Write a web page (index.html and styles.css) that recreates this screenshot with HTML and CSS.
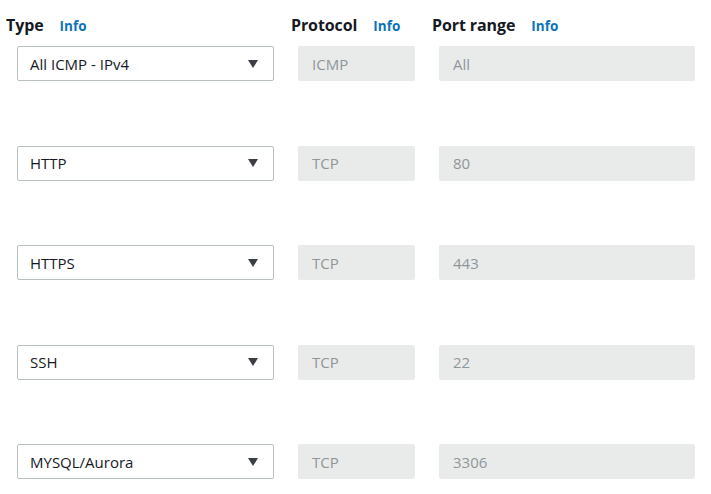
FILE: index.html
```html
<!DOCTYPE html>
<html>
<head>
<meta charset="utf-8">
<link rel="stylesheet" href="styles.css">
</head>
<body>
<div class="table">
  <div class="head">
    <div class="label">Type <span class="info">Info</span></div>
    <div class="label">Protocol <span class="info">Info</span></div>
    <div class="label">Port range <span class="info">Info</span></div>
  </div>
  <div class="rows">
    <div class="row">
      <div class="select"><span>All ICMP - IPv4</span><span class="caret"></span></div>
      <div class="field proto">ICMP</div>
      <div class="field port">All</div>
    </div>
    <div class="row">
      <div class="select"><span>HTTP</span><span class="caret"></span></div>
      <div class="field proto">TCP</div>
      <div class="field port">80</div>
    </div>
    <div class="row">
      <div class="select"><span>HTTPS</span><span class="caret"></span></div>
      <div class="field proto">TCP</div>
      <div class="field port">443</div>
    </div>
    <div class="row">
      <div class="select"><span>SSH</span><span class="caret"></span></div>
      <div class="field proto">TCP</div>
      <div class="field port">22</div>
    </div>
    <div class="row">
      <div class="select"><span>MYSQL/Aurora</span><span class="caret"></span></div>
      <div class="field proto">TCP</div>
      <div class="field port">3306</div>
    </div>
  </div>
</div>
</body>
</html>
```
FILE: styles.css
```css
html, body {
  margin: 0;
  padding: 0;
  background: #ffffff;
}
body {
  font-family: "Open Sans", "Noto Sans", sans-serif;
  color: #16191f;
  width: 711px;
  height: 494px;
  overflow: hidden;
}
.table {
  padding: 14px 0 0 6px;
}
.head, .row {
  display: grid;
  grid-template-columns: 268px 124px 263px;
  column-gap: 17px;
}
.head {
  height: 32px;
}
.label {
  font-size: 16px;
  font-weight: 700;
  line-height: 22px;
  letter-spacing: -0.1px;
  white-space: nowrap;
}
.info {
  color: #0a73bb;
  font-size: 13.5px;
  font-weight: 700;
  letter-spacing: 0;
  margin-left: 12px;
}
.rows {
  display: flex;
  flex-direction: column;
  gap: 64.5px;
}
.select, .field {
  height: 35px;
  box-sizing: border-box;
  display: flex;
  align-items: center;
  font-size: 15px;
}
.select {
  margin-left: 11px;
  border: 1px solid #b8c0c1;
  border-radius: 2px;
  padding: 0 15px 0 12px;
  justify-content: space-between;
  color: #16191f;
}
.caret {
  width: 0;
  height: 0;
  border-left: 5.5px solid transparent;
  border-right: 5.5px solid transparent;
  border-top: 8px solid #3b3f43;
}
.field {
  margin-left: 7px;
  background: #e9ebeb;
  border-radius: 2px;
  padding-left: 14px;
  color: #8f9698;
}
```
